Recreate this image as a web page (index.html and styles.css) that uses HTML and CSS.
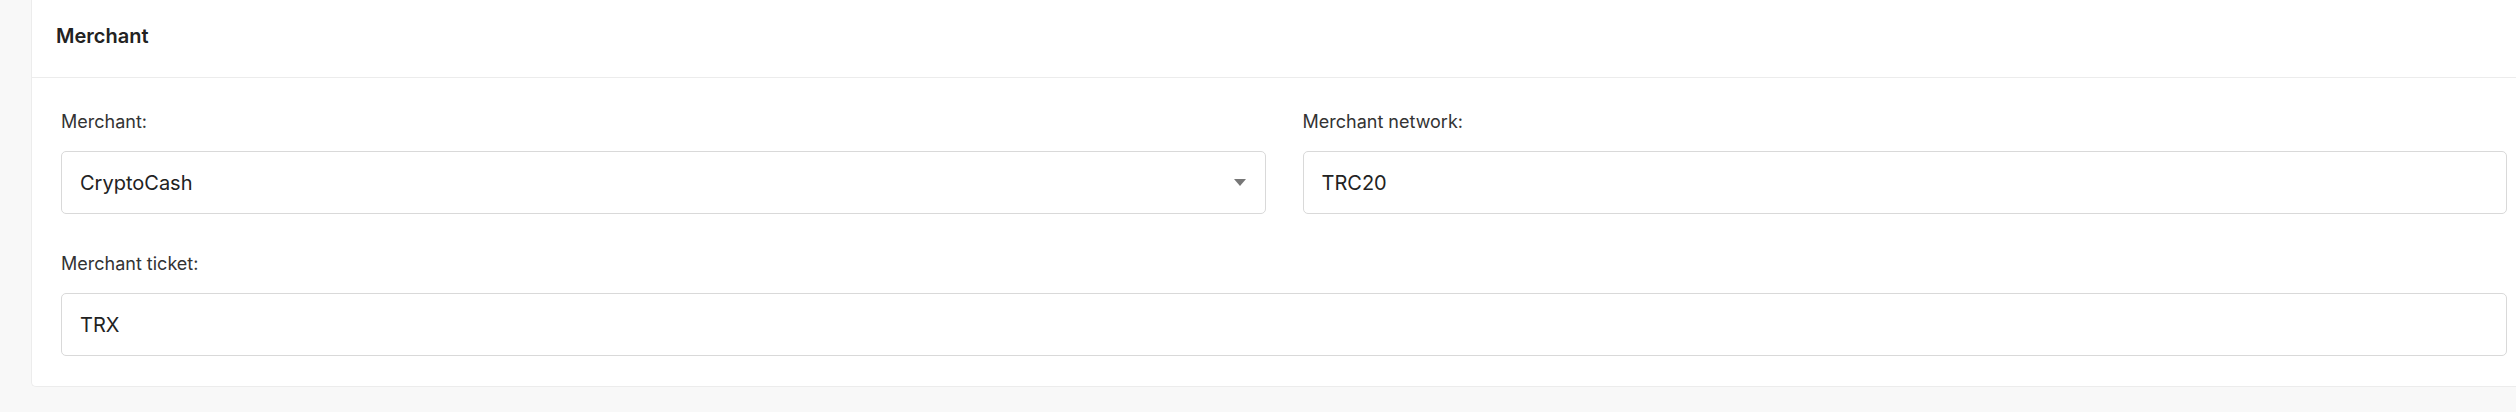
FILE: index.html
```html
<!DOCTYPE html>
<html>
<head>
<meta charset="utf-8">
<link rel="stylesheet" href="styles.css">
</head>
<body>
<div class="page">
  <section class="card">
    <header class="card-header">Merchant</header>
    <div class="card-body">
      <div class="grid">
        <div class="field">
          <div class="label">Merchant:</div>
          <div class="control select">
            <span class="value">CryptoCash</span>
            <svg class="caret" width="12" height="7" viewBox="0 0 12 7"><path d="M0 0 H12 L6 7 Z" fill="#777"/></svg>
          </div>
        </div>
        <div class="field">
          <div class="label">Merchant network:</div>
          <div class="control"><span class="value">TRC20</span></div>
        </div>
        <div class="field full">
          <div class="label">Merchant ticket:</div>
          <div class="control"><span class="value">TRX</span></div>
        </div>
      </div>
    </div>
  </section>
</div>
</body>
</html>
```

FILE: styles.css
```css
html, body {
  margin: 0;
  padding: 0;
  overflow: hidden;
  background: #f8f8f8;
  font-family: Inter, "Liberation Sans", sans-serif;
  color: #222;
}
.page {
  padding-left: 31px;
  height: 412px;
}
.card {
  margin-right: -21px;
  background: #fff;
  border-left: 1px solid #ececec;
  border-bottom: 1px solid #ececec;
  border-bottom-left-radius: 5px;
}
.card-header {
  height: 78px;
  box-sizing: border-box;
  padding: 24px 0 0 24px;
  font-size: 20px;
  line-height: 24px;
  font-weight: 600;
  color: #222;
  border-bottom: 1px solid #ececec;
}
.card-body {
  padding: 30px 30px 30px 29px;
}
.grid {
  display: grid;
  grid-template-columns: 1fr 1fr;
  column-gap: 37px;
  row-gap: 36px;
}
.field.full {
  grid-column: 1 / span 2;
}
.label {
  font-size: 18px;
  line-height: 27px;
  color: #333;
  margin-bottom: 16px;
}
.control {
  height: 63px;
  box-sizing: border-box;
  border: 1px solid #d9d9d9;
  border-radius: 5px;
  display: flex;
  align-items: center;
  padding: 0 18px;
  font-size: 20px;
  color: #222;
}
.select {
  justify-content: space-between;
}
.select .caret {
  margin-right: 1px;
}
```
